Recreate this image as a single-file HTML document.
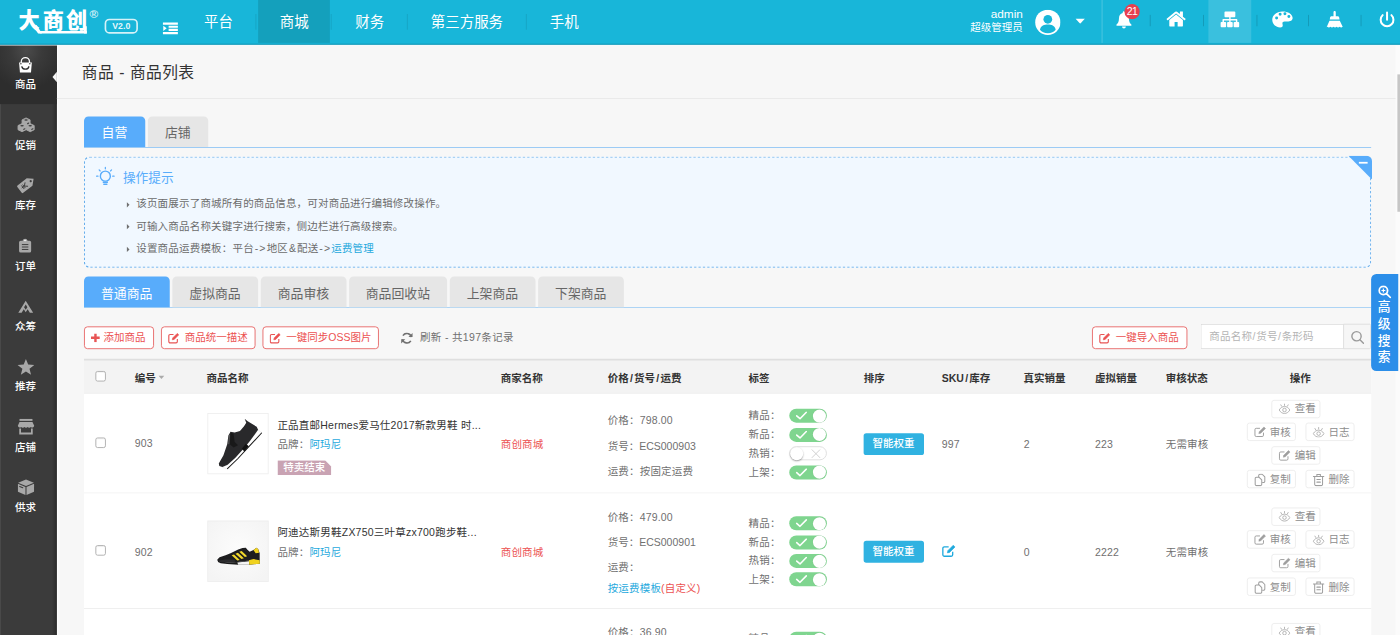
<!DOCTYPE html>
<html lang="zh-CN">
<head>
<meta charset="utf-8">
<title>商品 - 商品列表</title>
<style>
*{margin:0;padding:0;box-sizing:border-box;}
html,body{width:1400px;height:635px;overflow:hidden;background:#f7f7f7;}
body{font-family:"Liberation Sans","Noto Sans CJK SC",sans-serif;font-size:12px;color:#707070;}
a{text-decoration:none;color:inherit;}
ul{list-style:none;}
#stage{position:absolute;left:0;top:0;width:1600px;height:726px;transform:scale(0.875);transform-origin:0 0;background:#f7f7f7;overflow:hidden;}
.abs{position:absolute;}
/* ---------- header ---------- */
#hd{position:absolute;left:0;top:0;width:1600px;height:50.500px;background:#18b6d9;border-bottom:1.300px solid #0f8fae;box-shadow:0 1px 0 #f2fcff;z-index:5;}
#hd .logo{position:absolute;left:19px;top:4px;font-family:"Noto Sans CJK SC",sans-serif;font-weight:900;font-size:27px;line-height:36px;color:#fff;letter-spacing:-0.5px;}
#hd .ver{position:absolute;left:120px;top:22px;width:38px;height:17px;border:1.5px solid #fff;border-radius:5px;color:#fff;font-size:11px;line-height:14px;text-align:center;}
#hd .nav{position:absolute;left:206.600px;top:0;height:49px;display:flex;}
#hd .nav li{position:relative;height:49px;padding:0 2px;}
#hd .nav li:after{content:"";position:absolute;right:0;top:16px;width:1px;height:18px;background:rgba(0,0,0,.10);}
#hd .nav li:last-child:after{display:none;}
#hd .nav a{display:block;height:49px;line-height:50.500px;padding:0 24.700px;font-size:16.500px;color:#fff;}
#hd .nav li.on a{background:#14a0bc;}
#hd .uname{position:absolute;right:431px;top:9px;text-align:right;color:#fff;font-size:12px;line-height:15px;}
#hd .uname b{display:block;font-weight:normal;font-size:13.500px;line-height:15px;}
#hd .vline{position:absolute;left:1259px;top:0;width:1px;height:49px;background:rgba(255,255,255,.25);}
#hd .sep{position:absolute;top:16.500px;width:1px;height:13px;background:rgba(0,0,0,.17);}
#hd .hl{position:absolute;left:1381px;top:0;width:49px;height:49px;background:rgba(255,255,255,.15);}
#hd svg{position:absolute;}
/* ---------- sidebar ---------- */
#sb{position:absolute;left:0;top:50px;width:64.800px;height:680px;background:#3b3b3b;box-shadow:inset -4px 0 5px -2px rgba(0,0,0,.38),inset 1px 0 0 #4c4c4c,1.500px 0 0 #fdfdfd;}
#sb .it{position:absolute;left:0;width:65px;height:69px;text-align:center;color:#fff;font-size:12px;}
#sb .it span{position:absolute;left:0;width:58.600px;top:37.600px;line-height:18px;font-weight:500;}
#sb .it svg{position:absolute;left:21px;top:12px;width:23px;height:23px;}
#sb .it.on{background:radial-gradient(circle at 30px 8px,#4b4b4b 0,#3a3a3a 18px,#2d2d2d 44px);}
#sb .it.on:after{content:"";position:absolute;right:0;top:31.800px;border:6.500px solid transparent;border-right:5.200px solid #f7f7f7;border-left:0;}
/* ---------- main ---------- */
.title{position:absolute;left:93.500px;top:70px;font-size:18px;line-height:26px;color:#333;word-spacing:0.500px;letter-spacing:0.400px;}
.hr{position:absolute;left:65px;top:112px;width:1535px;height:1px;background:#e9e9e9;}
.tabs{position:absolute;left:96px;width:1471px;border-bottom:1.800px solid #8fc5f5;display:flex;}
.tabs li{height:35px;line-height:38.500px;width:69.500px;text-align:center;margin-right:3px;background:#e6e6e6;border-radius:5px 5px 0 0;font-size:14.700px;color:#666;overflow:hidden;}
.tabs.t2{border-bottom:1.100px solid #a3cff5;}
.tabs.t2 li{width:97.500px;margin-right:3.500px;}
.tabs.t2 li.w5{width:111.500px;}
.tabs li.on{background:#58acfb;color:#fff;}

/* ---------- tips ---------- */
#tips{position:absolute;left:96px;top:179px;width:1471px;height:127px;border-radius:6px;background:#f1f8ff;}
#tips .tt{position:absolute;left:44.500px;top:14px;font-size:14.500px;line-height:20px;color:#58acfb;}
#tips ul{position:absolute;left:47.500px;top:42.300px;}
#tips li{position:relative;padding-left:12.200px;line-height:25.400px;height:25.400px;font-size:12px;color:#6c6c6c;white-space:nowrap;letter-spacing:0.220px;}
#tips li i{font-style:normal;letter-spacing:1.300px;margin-left:1px;}
#tips li:before{content:"";position:absolute;left:1.500px;top:9.800px;border:3px solid transparent;border-left:3.500px solid #707070;border-right:0;}
#tips li a{color:#1fa9dd;}
#tips .fold{position:absolute;right:-1px;top:-1px;width:27px;height:27px;overflow:hidden;border-radius:0 6px 0 0;}
#tips .fold:before{content:"";position:absolute;right:0;top:0;border-top:27px solid #58acfb;border-left:27px solid transparent;}
#tips .fold:after{content:"";position:absolute;right:5px;top:7.300px;width:9.700px;height:2px;background:#fff;}
/* ---------- toolbar ---------- */
.btn{position:absolute;top:373px;height:26px;line-height:24.800px;border:1px solid #e66060;border-radius:4px;background:#fff;color:#ec5151;font-size:12px;white-space:nowrap;text-align:left;}
.btn svg{position:absolute;}
.btn span{position:absolute;top:0;}
.refresh{position:absolute;left:480px;top:373px;line-height:26px;font-size:12px;color:#707070;white-space:nowrap;letter-spacing:0.380px;}
.sinp{position:absolute;left:1372px;top:370px;width:164px;height:29px;border:1px solid #dbdbdb;border-right:0;background:#fff;border-radius:2px 0 0 2px;color:#b4b4b4;font-size:12px;line-height:27px;padding-left:9px;white-space:nowrap;letter-spacing:0.250px;}
.sinp u{text-decoration:none;padding:0 0.500px;}
.sbtn{position:absolute;left:1535px;top:370px;width:32px;height:29px;border:1px solid #dbdbdb;background:#f6f6f6;border-radius:0 2px 2px 0;}

/* ---------- table ---------- */
#tb{position:absolute;left:96px;top:410px;width:1471px;height:330px;background:#fff;}
#tb .th{position:absolute;left:0;top:0;width:1471px;height:40px;background:#f3f3f3;border-top:2px solid #dfdfdf;border-bottom:1px solid #ececec;font-weight:bold;color:#333;font-size:12px;line-height:38px;}
#tb .th span{position:absolute;top:1px;white-space:nowrap;}
#tb .th u{text-decoration:none;padding:0 1.400px;}
#tb .row{position:absolute;left:0;width:1471px;border-bottom:1px solid #ededed;background:#fff;}
#tb .row>*{position:absolute;white-space:nowrap;}
.ck{position:absolute;left:13px;width:12px;height:12px;border:1px solid #a9a9a9;border-radius:2.5px;background:#fff;box-shadow:inset 0 1px 1px rgba(0,0,0,.06);}
.c{line-height:20px;font-size:12px;color:#707070;letter-spacing:0.200px;}
.img{left:140.500px;width:70px;height:70px;border:1px solid #eee;background:#fff;overflow:hidden;}
.nm{left:221px;color:#333;line-height:20px;letter-spacing:0.260px;}
.br{left:221px;line-height:20px;}
.br a,.blue{color:#1fa9dd;}
.red{color:#ec5151;}
.tag{left:221px;width:61.500px;height:17px;background:#c9a3b3;color:#fff;font-size:12px;font-weight:500;line-height:17px;text-align:center;clip-path:polygon(0 0,calc(100% - 7px) 0,100% 7px,100% 100%,0 100%);}
.sw{left:805.500px;width:43px;height:16px;border-radius:8px;background:#7fd58f;}
.sw:after{content:"";position:absolute;right:0.500px;top:0.500px;width:15px;height:15px;border-radius:50%;background:#fff;box-shadow:0 0 1px rgba(0,0,0,.2);}
.sw svg{position:absolute;left:7px;top:3px;}
.sw.off{background:#fff;border:1px solid #dcdcdc;}
.sw.off:after{left:0;right:auto;top:-0.500px;box-shadow:0 1px 2px rgba(0,0,0,.35);}
.sw.off svg{left:24px;top:2px;}
.zn{left:891px;width:68.500px;height:25px;border-radius:3px;background:#30b2e1;color:#fff;font-size:12px;font-weight:500;line-height:25px;text-align:center;}
.ob{width:56px;height:21px;border:1px solid #ececec;border-radius:3px;background:#fff;color:#8d8d8d;font-size:12px;line-height:19px;}
.ob svg{position:absolute;left:7px;top:3px;}
.ob i{position:absolute;left:25.600px;top:0.900px;font-style:normal;}
</style>
</head>
<body>
<div id="stage">

<!-- header -->
<div id="hd">
  <svg style="left:0;top:0" width="210" height="50" viewBox="0 0 210 50">
  <text y="31.900" x="21.200 48.900 75.400" font-family="Noto Sans CJK SC, sans-serif" font-weight="900" font-size="24.200" fill="#fff">大商创</text>
  <path d="M43 35.300h56.200v2.900H45.500z" fill="#fff"/>
  <path d="M96 30h3.200v8.200H96z" fill="#fff"/>
  <path d="M38 30l3.800-1.500 6.200 9.700h-4.500z" fill="#fff"/>
  <text x="102.200" y="20" font-family="Liberation Sans, sans-serif" font-weight="bold" font-size="13.500" fill="#fff" fill-opacity="0.800">®</text>
  <rect x="120.500" y="22.300" width="36.200" height="15.300" rx="4.500" fill="none" stroke="#fff" stroke-opacity="0.820" stroke-width="1.900"/>
  <text x="138.600" y="33.600" text-anchor="middle" font-family="Liberation Sans, sans-serif" font-weight="bold" font-size="10" fill="#fff" fill-opacity="0.900">V2.0</text>
  <path d="M186.200 25.800h17.100v2.500h-17.100zM192.700 29.400h10.600v2.400h-10.600zM192.700 32.900h10.600v2.400h-10.600zM186.200 36.500h17.100v2.500h-17.100zM186.600 29.400l3.900 3-3.900 3z" fill="#fff"/>
  </svg>
  <ul class="nav">
    <li><a>平台</a></li><li class="on"><a>商城</a></li><li><a>财务</a></li><li><a>第三方服务</a></li><li><a>手机</a></li>
  </ul>
  <div class="uname"><b>admin</b>超级管理员</div>
  <svg style="left:1183px;top:11px" width="29" height="29" viewBox="0 0 29 29"><circle cx="14.5" cy="14.5" r="14.5" fill="#fff"/><circle cx="14.5" cy="11" r="5" fill="#18b6d9"/><path d="M5.5 23c1-5 5-6 9-6s8 1 9 6c-2 2.500-5 4-9 4s-7-1.500-9-4z" fill="#18b6d9"/></svg>
  <svg style="left:1229px;top:21px" width="11" height="6" viewBox="0 0 11 6"><path d="M0 0h11L5.500 6z" fill="#fff"/></svg>
  <svg style="left:0;top:0" width="1600" height="50" viewBox="0 0 1600 50">
<g fill="#fff">
<path transform="translate(1276 13)" d="M8.500 0c0.800 0 1.400 0.600 1.400 1.300v0.700c2.700 0.700 4.300 3 4.300 6 0 3.600 1 5.600 2.800 7v1.300H0v-1.300c1.800-1.400 2.800-3.400 2.800-7 0-3 1.600-5.300 4.300-6v-0.700c0-0.700 0.600-1.300 1.400-1.300zM6.300 17.300h4.400a2.200 2.200 0 0 1-4.400 0z"/>
<path transform="translate(1332 9.600) scale(0.01353)" d="M1472 992v480q0 26-19 45t-45 19h-384v-384h-256v384h-384q-26 0-45-19t-19-45v-480q0-1 .5-3t.5-3l575-474 575 474q1 2 1 6zm223-69l-62 74q-8 9-21 11h-3q-13 0-21-7l-692-577-692 577q-12 8-24 7-13-2-21-11l-62-74q-8-10-7-23.5t11-21.5l719-599q32-26 76-26t76 26l244 204v-195q0-14 9-23t23-9h192q14 0 23 9t9 23v408l219 182q10 8 11 21.5t-7 23.5z"/>
<path d="M1400.500 13h10.200a1.100 1.100 0 0 1 1.100 1.100v4.600a1.100 1.100 0 0 1-1.100 1.100h-4.300v2h6.900a0.800 0.800 0 0 1 0.800 0.800v2.400h1.100a1 1 0 0 1 1 1v4a1 1 0 0 1-1 1h-4.300a1 1 0 0 1-1-1v-4a1 1 0 0 1 1-1h1.500v-1.600h-6v1.600h1.400a1 1 0 0 1 1 1v4a1 1 0 0 1-1 1h-4.400a1 1 0 0 1-1-1v-4a1 1 0 0 1 1-1h1.400v-1.600h-6v1.600h1.500a1 1 0 0 1 1 1v4a1 1 0 0 1-1 1h-4.300a1 1 0 0 1-1-1v-4a1 1 0 0 1 1-1h1.100v-2.400a0.800 0.800 0 0 1 0.800-0.800h6.900v-2h-4.300a1.100 1.100 0 0 1-1.100-1.100v-4.600a1.100 1.100 0 0 1 1.100-1.100z"/>
<path transform="translate(1454 13)" fill-rule="evenodd" d="M11.500 0C5 0 0 4.200 0 9.600c0 5 4 8.700 9 8.700 2 0 3-1 3-2.300 0-1-0.400-1.500-0.400-2.300 0-1.200 1-2 2.400-2h3.300c3.300 0 6-1.200 6-4C23.300 3 18 0 11.500 0zM5 9.300a1.700 1.700 0 1 1 0-3.400 1.700 1.700 0 0 1 0 3.400zM9 5a1.700 1.700 0 1 1 0-3.400A1.700 1.700 0 0 1 9 5zM14.500 4.500a1.700 1.700 0 1 1 0-3.400 1.700 1.700 0 0 1 0 3.400zM19 7.500a1.700 1.700 0 1 1 0-3.400 1.700 1.700 0 0 1 0 3.400z"/>
<path transform="translate(1516 12.700)" d="M8 1.200c0-0.700 0.600-1.200 1.300-1.200s1.300 0.500 1.300 1.200v4.600h2.200c0.900 0 1.600 0.700 1.700 1.500l0.400 2.200H3.700l0.400-2.200c0.100-0.800 0.800-1.500 1.700-1.500H8zM3.400 11h11.800l3.300 7c-1.200 0.900-2.300 0.900-3.500 0-1.200 0.900-2.300 0.900-3.500 0-1.200 0.900-2.300 0.900-3.500 0-1.200 0.900-2.300 0.900-3.500 0-1.200 0.900-2.300 0.900-3.500 0-0.400 0.300-0.700 0.500-1 0.600z"/>
</g>
<g fill="none" stroke="#fff" stroke-width="2.300" stroke-linecap="round"><path d="M1580.200 17.300a7.300 7.300 0 1 0 10 0M1585.200 14.200v8.300"/></g>
<circle cx="1293.800" cy="13.400" r="8.700" fill="#e8404f"/>
<text x="1293.800" y="17.700" font-family="Liberation Sans, sans-serif" font-size="12" fill="#fff" text-anchor="middle" letter-spacing="-0.5">21</text>
</svg>
  <div class="vline"></div>
  <div class="hl"></div>
  <div class="sep" style="left:1314px"></div><div class="sep" style="left:1375px"></div><div class="sep" style="left:1436px"></div><div class="sep" style="left:1495px"></div><div class="sep" style="left:1555px"></div>
</div>

<!-- sidebar -->
<div id="sb">
<svg class="abs" style="left:0;top:0;z-index:3" width="65" height="680" viewBox="0 50 65 680">
<!-- bag -->
<g fill="#fff"><path d="M21.800 71.500h14.600l-1 11.300H22.800z"/><path d="M24.300 72.500v-2a4.700 4.700 0 0 1 9.400 0v2" fill="none" stroke="#fff" stroke-width="1.500"/></g>
<path d="M25 76.300c1 3.600 7 3.600 8 0" fill="none" stroke="#2e2e2e" stroke-width="1.500" stroke-linecap="round"/><circle cx="23.900" cy="72.800" r="0.800" fill="#2e2e2e"/><circle cx="34.100" cy="72.800" r="0.800" fill="#2e2e2e"/>
<!-- cubes -->
<g fill="#a8a8a8" stroke="#a8a8a8" stroke-width="1" stroke-linejoin="round">
<path d="M29.800 134.800l4.600 2.200v4.800l-4.600 2.200-4.600-2.200v-4.800z"/>
<path d="M25.200 141.300l4.600 2.200v4.800l-4.600 2.200-4.600-2.200v-4.800z"/>
<path d="M34.500 141.300l4.600 2.200v4.800l-4.600 2.200-4.600-2.200v-4.800z"/>
</g>
<g fill="#3c3c3c"><ellipse cx="29.800" cy="137.200" rx="2" ry="0.900"/><ellipse cx="25.200" cy="143.700" rx="2" ry="0.900"/><ellipse cx="34.500" cy="143.700" rx="2" ry="0.900"/><ellipse cx="32.200" cy="141" rx="1.400" ry="0.700" transform="rotate(-30 32.200 141)"/><ellipse cx="27.800" cy="147.500" rx="1.400" ry="0.700" transform="rotate(-30 27.800 147.500)"/><ellipse cx="37" cy="147.500" rx="1.400" ry="0.700" transform="rotate(-30 37 147.500)"/></g>
<!-- tag -->
<g transform="rotate(-38 30.600 210.500)"><path d="M21.300 205.200h13.400l5.800 5.300-5.800 5.300H21.300a1.200 1.200 0 0 1-1.200-1.200v-8.200a1.200 1.200 0 0 1 1.200-1.200z" fill="#a8a8a8"/><circle cx="36.300" cy="210.500" r="1.300" fill="#3c3c3c"/><path d="M24.300 207.300l2.800 3.200 2.800-3.200M27.100 210.500v3.800M24.600 211h5M24.600 212.700h5" fill="none" stroke="#3c3c3c" stroke-width="1" transform="rotate(90 27.100 210.500)"/></g>
<!-- clipboard -->
<path d="M23.600 275h2.200a3 3 0 0 1 5.800 0h2.200a1.800 1.800 0 0 1 1.800 1.800v10a1.800 1.800 0 0 1-1.800 1.800H23.600a1.800 1.800 0 0 1-1.800-1.800v-10a1.800 1.800 0 0 1 1.800-1.800z" fill="#a8a8a8"/>
<path d="M25 279.500h7.400M25 282.300h7.400M25 285.100h7.400" stroke="#3c3c3c" stroke-width="1.100"/><ellipse cx="28.700" cy="274.900" rx="1.500" ry="0.800" fill="#e8e8e8"/>
<!-- zhongchou -->
<path fill-rule="evenodd" d="M29.400 343.800l8.500 13.500h-3.800l-2.500-4-2.200 3.500-2.200-3.500-2.500 4h-3.800zM29.400 348l-1.900 3 1.900 3 1.900-3z" fill="#a8a8a8"/>
<!-- star -->
<path d="M29.6 410.2L32.2 416.7L39.2 417.1L33.7 421.5L35.5 428.3L29.6 424.5L23.8 428.3L25.6 421.5L20.1 417.1L27.1 416.7z" fill="#a8a8a8"/>
<!-- shop -->
<g fill="#a8a8a8"><rect x="22.300" y="478.800" width="14.800" height="2.200"/><path d="M22.300 482.300h14.800l2 4.400a2.300 2.300 0 0 1-3.800 1.300 2.300 2.300 0 0 1-3.700 0 2.300 2.300 0 0 1-3.700 0 2.300 2.300 0 0 1-3.700 0 2.300 2.300 0 0 1-3.800-1.300z"/><path d="M22 489.700h2v4.500h11.400v-4.500h2v6.800H22z"/></g>
<!-- box -->
<g fill="#a8a8a8"><path d="M29.700 548.100l9 3.700-9 3.700-9-3.700z"/><path d="M20.500 552.900l8.600 3.600v9.300l-8.600-3.700z"/><path d="M38.900 552.900l-8.600 3.600v9.300l8.600-3.700z"/></g>
<path d="M22.500 556l3.500 1.500" stroke="#3c3c3c" stroke-width="1.200" stroke-linecap="round"/>
</svg>
  <div class="it on" style="top:0"><span>商品</span></div>
  <div class="it" style="top:69px"><span>促销</span></div>
  <div class="it" style="top:138px"><span>库存</span></div>
  <div class="it" style="top:207px"><span>订单</span></div>
  <div class="it" style="top:276px"><span>众筹</span></div>
  <div class="it" style="top:345px"><span>推荐</span></div>
  <div class="it" style="top:414px"><span>店铺</span></div>
  <div class="it" style="top:483px"><span>供求</span></div>
</div>

<div class="title">商品 - 商品列表</div>
<div class="hr"></div>

<ul class="tabs" style="top:133px"><li class="on">自营</li><li>店铺</li></ul>

<div id="tips">
  <svg class="abs" style="left:0;top:0" width="1471" height="127" viewBox="0 0 1471 127" fill="none"><rect x="0.500" y="0.500" width="1470" height="126" rx="6" stroke="#62abea" stroke-width="1.200" stroke-dasharray="2.600 2.400"/>
  <g stroke="#58acfb" stroke-width="1.600" stroke-linecap="round"><circle cx="24.400" cy="22.300" r="5.700"/><path d="M22 29.300h4.800M22.600 31.600h3.600" stroke-width="1.500"/><path d="M24.400 12.300v1.600M17.300 15.200l1.200 1.200M31.500 15.200l-1.200 1.200M14.400 22.300h1.600M32.800 22.300h1.600" stroke-width="1.400"/></g></svg>
  <div class="tt">操作提示</div>
  <ul>
    <li>该页面展示了商城所有的商品信息，可对商品进行编辑修改操作。</li>
    <li>可输入商品名称关键字进行搜索，侧边栏进行高级搜索。</li>
    <li>设置商品运费模板：平台<i>-&gt;</i>地区<i>&amp;</i>配送<i>-&gt;</i><a>运费管理</a></li>
  </ul>
  <div class="fold"></div>
</div>

<ul class="tabs t2" style="top:316px"><li class="on">普通商品</li><li>虚拟商品</li><li>商品审核</li><li class="w5">商品回收站</li><li>上架商品</li><li>下架商品</li></ul>

<div class="btn" style="left:96px;width:80px"><svg style="left:7px;top:7px" width="10.200" height="10.200" viewBox="0 0 11 11"><path d="M4 0h3v4h4v3H7v4H4V7H0V4h4z" fill="#e85555"/></svg><span style="left:21.300px">添加商品</span></div>
<div class="btn" style="left:184px;width:108px"><svg style="left:7.200px;top:5.500px" width="13" height="13" viewBox="0 0 14 14" fill="none" stroke="#e85555" stroke-width="1.400"><path d="M11.500 8v3.200a1.600 1.600 0 0 1-1.600 1.600H2.600A1.600 1.600 0 0 1 1 11.200V4a1.600 1.600 0 0 1 1.600-1.600h4.200"/><path d="M5.300 9l0.500-2.300 5.600-5.600 1.800 1.800-5.600 5.600z" fill="#ec5151" stroke-width="0.8"/></svg><span style="left:26.200px">商品统一描述</span></div>
<div class="btn" style="left:300px;width:133px"><svg style="left:7.200px;top:5.500px" width="13" height="13" viewBox="0 0 14 14" fill="none" stroke="#e85555" stroke-width="1.400"><path d="M11.500 8v3.200a1.600 1.600 0 0 1-1.600 1.600H2.600A1.600 1.600 0 0 1 1 11.200V4a1.600 1.600 0 0 1 1.600-1.600h4.200"/><path d="M5.300 9l0.500-2.300 5.600-5.600 1.800 1.800-5.600 5.600z" fill="#ec5151" stroke-width="0.8"/></svg><span style="left:26.200px">一键同步OSS图片</span></div>
<div class="refresh"><svg class="abs" style="left:-22px;top:7px" width="14" height="13" viewBox="0 0 14 13" fill="none" stroke="#707070" stroke-width="1.800"><path d="M12 5.200A5.200 5.200 0 0 0 2.500 3.500M2 7.800a5.200 5.200 0 0 0 9.500 1.700"/><path d="M13.500 0.500v4.700H8.800zM0.500 12.500V7.800h4.700z" fill="#707070" stroke="none"/></svg>刷新 - 共197条记录</div>
<div class="btn" style="left:1248px;width:109px"><svg style="left:7.200px;top:5.500px" width="13" height="13" viewBox="0 0 14 14" fill="none" stroke="#e85555" stroke-width="1.400"><path d="M11.500 8v3.200a1.600 1.600 0 0 1-1.600 1.600H2.600A1.600 1.600 0 0 1 1 11.200V4a1.600 1.600 0 0 1 1.600-1.600h4.200"/><path d="M5.300 9l0.500-2.300 5.600-5.600 1.800 1.800-5.600 5.600z" fill="#ec5151" stroke-width="0.8"/></svg><span style="left:26.200px">一键导入商品</span></div>
<div class="sinp">商品名称<u>/</u>货号<u>/</u>条形码</div>
<div class="sbtn"><svg class="abs" style="left:8px;top:7px" width="15" height="15" viewBox="0 0 15 15" fill="none" stroke="#9a9a9a" stroke-width="1.600"><circle cx="6.300" cy="6.300" r="5.300"/><path d="M10.200 10.200l4 4" stroke-linecap="round"/></svg></div>

<div id="tb">
<div class="th"><div class="ck" style="top:12px"></div>
<span style="left:58px">编号</span><svg class="abs" style="left:85px;top:17px" width="7" height="4" viewBox="0 0 7 4"><path d="M0 0h7L3.500 4z" fill="#aaa"/></svg>
<span style="left:140px">商品名称</span><span style="left:476.300px">商家名称</span><span style="left:598.500px">价格<u>/</u>货号<u>/</u>运费</span><span style="left:759.500px">标签</span><span style="left:891px">排序</span><span style="left:980.300px">SKU<u>/</u>库存</span><span style="left:1073.700px">真实销量</span><span style="left:1155.300px">虚拟销量</span><span style="left:1236.300px">审核状态</span><span style="left:1378px">操作</span></div>
<div class="row" style="top:40px;height:114px">
<div class="ck" style="top:50px"></div>
<div class="c" style="left:58px;top:47px">903</div>
<div class="img" style="top:22px"><svg class="abs" style="left:0;top:0" width="68" height="68" viewBox="0 0 70 70">
<polygon points="58.6,18.8 63.0,22.2 46.7,39.8 35.0,52.5 22.3,64.8 17.5,63.1 16.6,62.6 22.8,59.8 31.9,51.5 42.5,39.8 49.0,32.0" fill="#fff" stroke="#dcdcdc" stroke-width="0.500"/>
<polyline points="63.0,22.2 46.7,39.8 35.0,52.5 22.3,64.8" fill="none" stroke="#1c1c1c" stroke-width="1.200" stroke-linejoin="round"/>
<polygon points="42.8,5.6 46.4,8.7 57.0,15.2 58.6,18.8 49.0,32.0 42.5,39.8 31.9,51.5 22.8,59.8 16.6,62.6 13.0,61.3 12.4,58.5 17.9,48.6 22.3,35.6 23.7,25.3 26.2,21.1 31.1,21.9 37.3,20.1 42.1,14.6 44.7,10.4" fill="#29292b"/>
<polygon points="44.3,35.1 47.7,38.2 42.5,44.2 39.4,41.1" fill="#111"/>
<polygon points="26.2,22.0 29.8,23.3 31.1,33.1 35.0,36.9 29.8,39.5 25.3,35.6" fill="#141414" opacity="0.750"/>
<path d="M24.9,24.6 L24.1,35.6" fill="none" stroke="#6a6a6a" stroke-width="0.900"/>
</svg></div>
<div class="c nm" style="top:25.500px">正品直邮Hermes爱马仕2017新款男鞋 时...</div>
<div class="c br" style="top:48px">品牌：<a>阿玛尼</a></div>
<div class="tag" style="top:76px">特卖结束</div>
<div class="c red" style="left:476.300px;top:47.500px">商创商城</div>
<div class="c" style="left:598.500px;top:20.500px">价格：798.00</div>
<div class="c" style="left:598.500px;top:49.500px;letter-spacing:0">货号：ECS000903</div>
<div class="c" style="left:598.500px;top:78.500px">运费：按固定运费</div>
<div class="c" style="left:759.500px;top:15.4px">精品：</div>
<div class="sw" style="top:17.4px"><svg width="14" height="10" viewBox="0 0 14 10" fill="none" stroke="#fff" stroke-width="1.800" stroke-linecap="round" stroke-linejoin="round"><path d="M1.500 5.200l3.800 3.300L12.500 1.200"/></svg></div>
<div class="c" style="left:759.500px;top:36.8px">新品：</div>
<div class="sw" style="top:38.8px"><svg width="14" height="10" viewBox="0 0 14 10" fill="none" stroke="#fff" stroke-width="1.800" stroke-linecap="round" stroke-linejoin="round"><path d="M1.500 5.200l3.800 3.300L12.500 1.200"/></svg></div>
<div class="c" style="left:759.500px;top:58.2px">热销：</div>
<div class="sw off" style="top:60.2px"><svg width="11" height="11" viewBox="0 0 11 11" fill="none" stroke="#cfcfcf" stroke-width="1.100" stroke-linecap="round"><path d="M1 1l9 9M10 1l-9 9"/></svg></div>
<div class="c" style="left:759.500px;top:79.6px">上架：</div>
<div class="sw" style="top:81.6px"><svg width="14" height="10" viewBox="0 0 14 10" fill="none" stroke="#fff" stroke-width="1.800" stroke-linecap="round" stroke-linejoin="round"><path d="M1.500 5.200l3.800 3.300L12.500 1.200"/></svg></div>
<div class="zn" style="top:44.700px">智能权重</div>
<div class="c" style="left:980.300px;top:47.500px">997</div>
<div class="c" style="left:1074px;top:47.500px">2</div>
<div class="c" style="left:1155.300px;top:47.500px">223</div>
<div class="c" style="left:1236.300px;top:47.500px">无需审核</div>
<div class="ob" style="left:1357px;top:6.5px"><svg width="14" height="12.500" style="top:3.500px;left:7.300px" viewBox="0 0 16 14" fill="none" stroke="#adadad" stroke-width="1.150"><path d="M1 8.500c2-3.200 4.300-4.500 7-4.500s5 1.300 7 4.500c-2 3.200-4.300 4.500-7 4.500s-5-1.300-7-4.500z"/><circle cx="8" cy="8.500" r="2.300"/><path d="M8 0.500v2M3.200 1.800l1 1.700M12.800 1.800l-1 1.700" stroke-linecap="round"/></svg><i>查看</i></div>
<div class="ob" style="left:1328.5px;top:33.3px"><svg width="14.500" height="13" viewBox="0 0 15 14" fill="none" stroke="#9a9a9a" stroke-width="1.150"><path d="M11.500 8v3.200a1.600 1.600 0 0 1-1.600 1.600H2.600A1.600 1.600 0 0 1 1 11.200V4.300a1.600 1.600 0 0 1 1.600-1.600h4.600"/><path d="M5.800 9.200l0.500-2.400 5.800-5.800 1.900 1.900-5.800 5.800z" fill="#9e9e9e" stroke-width="0.600"/></svg><i>审核</i></div>
<div class="ob" style="left:1395.7px;top:33.3px"><svg width="14" height="12.500" style="top:3.500px;left:7.300px" viewBox="0 0 16 14" fill="none" stroke="#adadad" stroke-width="1.150"><path d="M1 8.500c2-3.200 4.300-4.500 7-4.500s5 1.300 7 4.500c-2 3.200-4.300 4.500-7 4.500s-5-1.300-7-4.500z"/><circle cx="8" cy="8.500" r="2.300"/><path d="M8 0.500v2M3.200 1.800l1 1.700M12.800 1.800l-1 1.700" stroke-linecap="round"/></svg><i>日志</i></div>
<div class="ob" style="left:1357px;top:60.1px"><svg width="14.500" height="13" viewBox="0 0 15 14" fill="none" stroke="#9a9a9a" stroke-width="1.150"><path d="M11.500 8v3.200a1.600 1.600 0 0 1-1.600 1.600H2.600A1.600 1.600 0 0 1 1 11.200V4.300a1.600 1.600 0 0 1 1.600-1.600h4.600"/><path d="M5.800 9.200l0.500-2.400 5.800-5.800 1.900 1.900-5.800 5.800z" fill="#9e9e9e" stroke-width="0.600"/></svg><i>编辑</i></div>
<div class="ob" style="left:1328.5px;top:86.9px"><svg width="15" height="15" viewBox="0 0 15 15" fill="none" stroke="#9e9e9e" stroke-width="1.150" stroke-linejoin="round"><path d="M5.500 4.500V2.500a1.500 1.500 0 0 1 1.500-1.500h2.500l3 3v5a1.500 1.500 0 0 1-1.500 1.500h-1.500"/><path d="M1.500 6a1.500 1.500 0 0 1 1.500-1.500h3l3 3v5a1.500 1.500 0 0 1-1.500 1.500H3a1.500 1.500 0 0 1-1.500-1.500z"/></svg><i>复制</i></div>
<div class="ob" style="left:1395.7px;top:86.9px"><svg width="14" height="15" viewBox="0 0 14 15" fill="none" stroke="#9e9e9e" stroke-width="1.150" stroke-linecap="round"><path d="M1 3.500h12M5 3.200V1.200h4v2M2.500 3.500v9a1.500 1.500 0 0 0 1.500 1.500h6a1.500 1.500 0 0 0 1.500-1.500v-9M5 7h4M5 10h4"/></svg><i>删除</i></div>
</div>
<div class="row" style="top:154px;height:132px">
<div class="ck" style="top:59px"></div>
<div class="c" style="left:58px;top:56.500px">902</div>
<div class="img" style="top:31px;background:#f5f5f5"><svg class="abs" style="left:0;top:0" width="68" height="68" viewBox="0 0 70 70">
<defs><radialGradient id="g2" cx="50%" cy="45%" r="65%"><stop offset="0" stop-color="#fcfcfc"/><stop offset="1" stop-color="#f4f4f4"/></radialGradient></defs>
<rect width="70" height="70" fill="url(#g2)"/>
<polygon points="11.1,46.0 22.3,48.1 35.2,47.6 48.1,45.5 60.5,45.5 60.7,49.6 48.1,50.9 35.2,50.9 22.3,49.9 14.6,49.0 11.5,47.6" fill="#1a1a1a"/>
<polygon points="10.7,44.7 13.3,42.2 20.4,39.6 26.2,37.4 35.2,32.9 40.3,31.3 44.2,30.8 45.8,32.9 48.7,35.7 53.2,33.5 56.9,30.8 59.0,32.9 60.5,37.4 60.5,45.8 48.1,45.8 35.2,47.7 22.3,48.3 13.3,47.7 11.1,46.4" fill="#1d1d1f"/>
<polygon points="34.2,48.3 48.1,46.8 48.1,50.9 35.2,50.9" fill="#f4f4f4"/>
<polygon points="47.8,45.5 53.2,44.2 60.5,45.5 60.7,49.6 48.3,50.9" fill="#f0d21e"/>
<polygon points="53.2,33.5 56.9,30.8 59.0,32.9 59.7,36.7 55.8,37.4" fill="#f0d21e"/>
<polygon points="27.5,39.6 30.3,38.8 37.1,45.2 34.2,46.0" fill="#f2d92c"/><polygon points="32.0,37.8 34.9,36.7 41.9,43.2 39.1,44.2" fill="#f2d92c"/><polygon points="36.5,35.7 39.3,34.7 45.8,40.9 43.2,41.9" fill="#f2d92c"/>
<polygon points="12.6,45.8 20.4,44.7 31.3,44.7 31.3,47.6 22.3,48.3 13.3,47.7" fill="#2c2c2e"/>
</svg></div>
<div class="c nm" style="top:34.500px">阿迪达斯男鞋ZX750三叶草zx700跑步鞋...</div>
<div class="c br" style="top:57px">品牌：<a>阿玛尼</a></div>
<div class="c red" style="left:476.300px;top:56.500px">商创商城</div>
<div class="c" style="left:598.500px;top:16.500px">价格：479.00</div>
<div class="c" style="left:598.500px;top:45.500px;letter-spacing:0">货号：ECS000901</div>
<div class="c" style="left:598.500px;top:74.500px">运费：</div>
<div class="c" style="left:598.500px;top:99px"><span class="blue">按运费模板</span><span class="red">(自定义)</span></div>
<div class="c" style="left:759.500px;top:24.2px">精品：</div>
<div class="sw" style="top:26.2px"><svg width="14" height="10" viewBox="0 0 14 10" fill="none" stroke="#fff" stroke-width="1.800" stroke-linecap="round" stroke-linejoin="round"><path d="M1.500 5.200l3.800 3.300L12.500 1.200"/></svg></div>
<div class="c" style="left:759.500px;top:45.6px">新品：</div>
<div class="sw" style="top:47.6px"><svg width="14" height="10" viewBox="0 0 14 10" fill="none" stroke="#fff" stroke-width="1.800" stroke-linecap="round" stroke-linejoin="round"><path d="M1.500 5.200l3.800 3.300L12.500 1.200"/></svg></div>
<div class="c" style="left:759.500px;top:67.0px">热销：</div>
<div class="sw" style="top:69.0px"><svg width="14" height="10" viewBox="0 0 14 10" fill="none" stroke="#fff" stroke-width="1.800" stroke-linecap="round" stroke-linejoin="round"><path d="M1.500 5.200l3.800 3.300L12.500 1.200"/></svg></div>
<div class="c" style="left:759.500px;top:88.4px">上架：</div>
<div class="sw" style="top:90.4px"><svg width="14" height="10" viewBox="0 0 14 10" fill="none" stroke="#fff" stroke-width="1.800" stroke-linecap="round" stroke-linejoin="round"><path d="M1.500 5.200l3.800 3.300L12.500 1.200"/></svg></div>
<div class="zn" style="top:53.500px">智能权重</div>
<div style="left:980px;top:58px;width:17px;height:15px"><svg width="17" height="15" viewBox="0 0 15 14" fill="none" stroke="#1fa9dd" stroke-width="1.400"><path d="M11.500 8v3.200a1.600 1.600 0 0 1-1.600 1.600H2.600A1.600 1.600 0 0 1 1 11.200V4.300a1.600 1.600 0 0 1 1.600-1.600h4.600"/><path d="M5.800 9.200l0.500-2.400 5.800-5.800 1.900 1.900-5.800 5.800z" fill="#1fa9dd" stroke-width="0.600"/></svg></div>
<div class="c" style="left:1074px;top:56.500px">0</div>
<div class="c" style="left:1155.300px;top:56.500px">2222</div>
<div class="c" style="left:1236.300px;top:56.500px">无需审核</div>
<div class="ob" style="left:1357px;top:15.5px"><svg width="14" height="12.500" style="top:3.500px;left:7.300px" viewBox="0 0 16 14" fill="none" stroke="#adadad" stroke-width="1.150"><path d="M1 8.500c2-3.200 4.300-4.500 7-4.500s5 1.300 7 4.500c-2 3.200-4.300 4.500-7 4.500s-5-1.300-7-4.500z"/><circle cx="8" cy="8.500" r="2.300"/><path d="M8 0.500v2M3.200 1.800l1 1.700M12.800 1.800l-1 1.700" stroke-linecap="round"/></svg><i>查看</i></div>
<div class="ob" style="left:1328.5px;top:42.3px"><svg width="14.500" height="13" viewBox="0 0 15 14" fill="none" stroke="#9a9a9a" stroke-width="1.150"><path d="M11.500 8v3.200a1.600 1.600 0 0 1-1.600 1.600H2.600A1.600 1.600 0 0 1 1 11.200V4.300a1.600 1.600 0 0 1 1.600-1.600h4.600"/><path d="M5.800 9.200l0.500-2.400 5.800-5.800 1.900 1.900-5.800 5.800z" fill="#9e9e9e" stroke-width="0.600"/></svg><i>审核</i></div>
<div class="ob" style="left:1395.7px;top:42.3px"><svg width="14" height="12.500" style="top:3.500px;left:7.300px" viewBox="0 0 16 14" fill="none" stroke="#adadad" stroke-width="1.150"><path d="M1 8.500c2-3.200 4.300-4.500 7-4.500s5 1.300 7 4.500c-2 3.200-4.300 4.500-7 4.500s-5-1.300-7-4.500z"/><circle cx="8" cy="8.500" r="2.300"/><path d="M8 0.500v2M3.200 1.800l1 1.700M12.800 1.800l-1 1.700" stroke-linecap="round"/></svg><i>日志</i></div>
<div class="ob" style="left:1357px;top:69.1px"><svg width="14.500" height="13" viewBox="0 0 15 14" fill="none" stroke="#9a9a9a" stroke-width="1.150"><path d="M11.500 8v3.200a1.600 1.600 0 0 1-1.600 1.600H2.600A1.600 1.600 0 0 1 1 11.200V4.300a1.600 1.600 0 0 1 1.600-1.600h4.600"/><path d="M5.800 9.200l0.500-2.400 5.800-5.800 1.900 1.900-5.800 5.800z" fill="#9e9e9e" stroke-width="0.600"/></svg><i>编辑</i></div>
<div class="ob" style="left:1328.5px;top:95.9px"><svg width="15" height="15" viewBox="0 0 15 15" fill="none" stroke="#9e9e9e" stroke-width="1.150" stroke-linejoin="round"><path d="M5.500 4.500V2.500a1.500 1.500 0 0 1 1.500-1.500h2.500l3 3v5a1.500 1.500 0 0 1-1.500 1.500h-1.500"/><path d="M1.500 6a1.500 1.500 0 0 1 1.500-1.500h3l3 3v5a1.500 1.500 0 0 1-1.500 1.500H3a1.500 1.500 0 0 1-1.500-1.500z"/></svg><i>复制</i></div>
<div class="ob" style="left:1395.7px;top:95.9px"><svg width="14" height="15" viewBox="0 0 14 15" fill="none" stroke="#9e9e9e" stroke-width="1.150" stroke-linecap="round"><path d="M1 3.500h12M5 3.200V1.200h4v2M2.500 3.500v9a1.500 1.500 0 0 0 1.500 1.500h6a1.500 1.500 0 0 0 1.500-1.500v-9M5 7h4M5 10h4"/></svg><i>删除</i></div>
</div>
<div class="row" style="top:286px;height:132px">
<div class="ck" style="top:59px"></div>
<div class="c" style="left:598.500px;top:16.500px">价格：36.90</div>
<div class="c" style="left:759.500px;top:24.2px">精品：</div>
<div class="sw" style="top:26.2px"><svg width="14" height="10" viewBox="0 0 14 10" fill="none" stroke="#fff" stroke-width="1.800" stroke-linecap="round" stroke-linejoin="round"><path d="M1.500 5.200l3.800 3.300L12.500 1.200"/></svg></div>
<div class="c" style="left:759.500px;top:45.6px">新品：</div>
<div class="sw" style="top:47.6px"><svg width="14" height="10" viewBox="0 0 14 10" fill="none" stroke="#fff" stroke-width="1.800" stroke-linecap="round" stroke-linejoin="round"><path d="M1.500 5.200l3.800 3.300L12.500 1.200"/></svg></div>
<div class="c" style="left:759.500px;top:67.0px">热销：</div>
<div class="sw" style="top:69.0px"><svg width="14" height="10" viewBox="0 0 14 10" fill="none" stroke="#fff" stroke-width="1.800" stroke-linecap="round" stroke-linejoin="round"><path d="M1.500 5.200l3.800 3.300L12.500 1.200"/></svg></div>
<div class="c" style="left:759.500px;top:88.4px">上架：</div>
<div class="sw" style="top:90.4px"><svg width="14" height="10" viewBox="0 0 14 10" fill="none" stroke="#fff" stroke-width="1.800" stroke-linecap="round" stroke-linejoin="round"><path d="M1.500 5.200l3.800 3.300L12.500 1.200"/></svg></div>
<div class="ob" style="left:1357px;top:15.5px"><svg width="14" height="12.500" style="top:3.500px;left:7.300px" viewBox="0 0 16 14" fill="none" stroke="#adadad" stroke-width="1.150"><path d="M1 8.500c2-3.200 4.300-4.500 7-4.500s5 1.300 7 4.500c-2 3.200-4.300 4.500-7 4.500s-5-1.300-7-4.500z"/><circle cx="8" cy="8.500" r="2.300"/><path d="M8 0.500v2M3.200 1.800l1 1.700M12.800 1.800l-1 1.700" stroke-linecap="round"/></svg><i>查看</i></div>
<div class="ob" style="left:1328.5px;top:42.3px"><svg width="14.500" height="13" viewBox="0 0 15 14" fill="none" stroke="#9a9a9a" stroke-width="1.150"><path d="M11.500 8v3.200a1.600 1.600 0 0 1-1.600 1.600H2.600A1.600 1.600 0 0 1 1 11.200V4.300a1.600 1.600 0 0 1 1.600-1.600h4.600"/><path d="M5.800 9.200l0.500-2.400 5.800-5.800 1.900 1.900-5.800 5.800z" fill="#9e9e9e" stroke-width="0.600"/></svg><i>审核</i></div>
<div class="ob" style="left:1395.7px;top:42.3px"><svg width="14" height="12.500" style="top:3.500px;left:7.300px" viewBox="0 0 16 14" fill="none" stroke="#adadad" stroke-width="1.150"><path d="M1 8.500c2-3.200 4.300-4.500 7-4.500s5 1.300 7 4.500c-2 3.200-4.300 4.500-7 4.500s-5-1.300-7-4.500z"/><circle cx="8" cy="8.500" r="2.300"/><path d="M8 0.500v2M3.200 1.800l1 1.700M12.800 1.800l-1 1.700" stroke-linecap="round"/></svg><i>日志</i></div>
<div class="ob" style="left:1357px;top:69.1px"><svg width="14.500" height="13" viewBox="0 0 15 14" fill="none" stroke="#9a9a9a" stroke-width="1.150"><path d="M11.500 8v3.200a1.600 1.600 0 0 1-1.600 1.600H2.600A1.600 1.600 0 0 1 1 11.200V4.300a1.600 1.600 0 0 1 1.600-1.600h4.600"/><path d="M5.800 9.200l0.500-2.400 5.800-5.800 1.900 1.900-5.800 5.800z" fill="#9e9e9e" stroke-width="0.600"/></svg><i>编辑</i></div>
<div class="ob" style="left:1328.5px;top:95.9px"><svg width="15" height="15" viewBox="0 0 15 15" fill="none" stroke="#9e9e9e" stroke-width="1.150" stroke-linejoin="round"><path d="M5.500 4.500V2.500a1.500 1.500 0 0 1 1.500-1.500h2.500l3 3v5a1.500 1.500 0 0 1-1.500 1.500h-1.500"/><path d="M1.500 6a1.500 1.500 0 0 1 1.500-1.500h3l3 3v5a1.500 1.500 0 0 1-1.500 1.500H3a1.500 1.500 0 0 1-1.500-1.500z"/></svg><i>复制</i></div>
<div class="ob" style="left:1395.7px;top:95.9px"><svg width="14" height="15" viewBox="0 0 14 15" fill="none" stroke="#9e9e9e" stroke-width="1.150" stroke-linecap="round"><path d="M1 3.500h12M5 3.200V1.200h4v2M2.500 3.500v9a1.500 1.500 0 0 0 1.500 1.500h6a1.500 1.500 0 0 0 1.500-1.500v-9M5 7h4M5 10h4"/></svg><i>删除</i></div>
</div>
</div>

<div class="abs" style="left:1595.200px;top:50px;width:5px;height:680px;background:#fbfbfb;"></div>
<div class="abs" style="left:1597.400px;top:84.600px;width:3px;height:157.700px;background:#c6c6c6;"></div>
<div class="abs" style="left:1566.500px;top:312.500px;width:31px;height:111px;background:#2b8ee9;border-radius:6px 0 0 6px;color:#fff;font-size:14.600px;font-weight:500;line-height:19.300px;text-align:center;padding-top:28.800px;">高<br>级<br>搜<br>索<svg class="abs" style="left:8px;top:13px" width="15" height="15" viewBox="0 0 15 15" fill="none" stroke="#fff" stroke-width="2"><circle cx="6" cy="6" r="4.800"/><path d="M9.500 9.500l4.500 4.500" stroke-linecap="round"/><path d="M6 3.800v4.400M3.800 6h4.400" stroke-width="1.300"/></svg></div>

</div>
</body>
</html>
